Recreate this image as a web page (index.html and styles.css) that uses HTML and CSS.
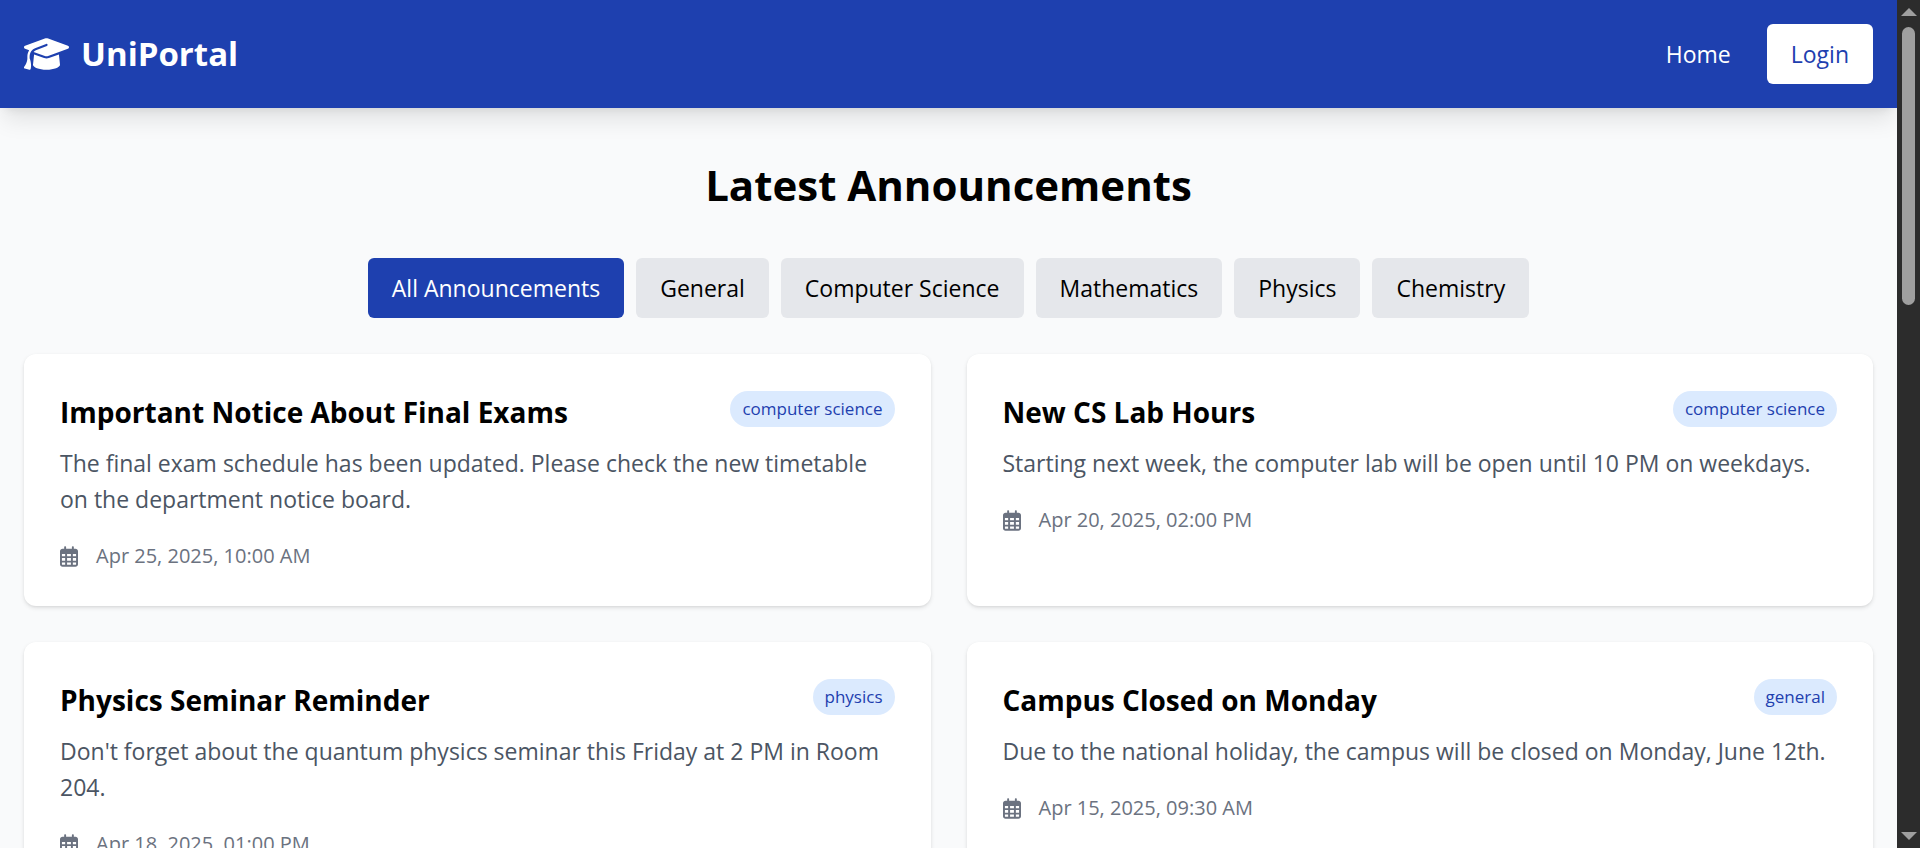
FILE: index.html
```html
<!DOCTYPE html>
<html lang="en">
<head>
  <meta charset="UTF-8" />
  <meta name="viewport" content="width=device-width, initial-scale=1.0" />
  <title>UniPortal</title>
  <link rel="stylesheet" href="styles.css">
</head>
<body>
  <!-- Shared icons -->
  <svg class="sprite" aria-hidden="true">
    <symbol id="icon-calendar" viewBox="0 0 448 512">
      <path d="M152 24c0-13.3-10.7-24-24-24s-24 10.7-24 24V64H64C28.7 64 0 92.7 0 128v16 48V448c0 35.3 28.7 64 64 64H384c35.3 0 64-28.7 64-64V192 144 128c0-35.3-28.7-64-64-64H344V24c0-13.3-10.7-24-24-24s-24 10.7-24 24V64H152V24zM48 192h80v56H48V192zm0 104h80v64H48V296zm128 0h96v64H176V296zm144 0h80v64H320V296zm80-48H320V192h80v56zm0 160v40c0 8.8-7.2 16-16 16H320V408h80zm-128 0v56H176V408h96zm-144 0v56H64c-8.8 0-16-7.2-16-16V408h80zM272 248H176V192h96v56z"/>
    </symbol>
  </svg>

  <div class="page">
    <header class="navbar">
      <a href="#" class="brand">
        <svg class="brand-icon" viewBox="0 0 640 512" aria-hidden="true">
          <path d="M320 32c-8.1 0-16.1 1.4-23.7 4.1L15.8 137.4C6.3 140.9 0 149.9 0 160s6.3 19.1 15.8 22.6l57.9 20.9C57.3 229.3 48 259.8 48 291.9v28.1c0 28.4-10.8 57.7-22.3 80.8c-6.5 13-13.9 25.8-22.5 37.6C0 442.7-.9 448.3 .9 453.4s6 8.9 11.2 10.2l64 16c4.2 1.1 8.7 .3 12.4-2s6.3-6.1 7.1-10.4c8.6-42.8 4.3-81.2-2.1-108.7C90.3 344.3 86 329.8 80 316.5V291.9c0-30.2 10.2-58.7 27.9-81.5c12.9-15.5 29.6-28 49.2-35.7l157-61.7c8.2-3.2 17.5 .8 20.7 9s-.8 17.5-9 20.7l-157 61.7c-12.4 4.9-23.3 12.4-32.2 21.6l159.6 57.6c7.6 2.7 15.6 4.1 23.7 4.1s16.1-1.4 23.7-4.1L624.2 182.6c9.5-3.4 15.8-12.5 15.8-22.6s-6.3-19.1-15.8-22.6L343.7 36.1C336.1 33.4 328.1 32 320 32zM128 408c0 35.3 86 72 192 72s192-36.7 192-72L496.7 262.6 354.5 314c-11.1 4-22.8 6-34.5 6s-23.5-2-34.5-6L143.3 262.6 128 408z"/>
        </svg>
        <span>UniPortal</span>
      </a>
      <nav class="nav-links">
        <a href="#">Home</a>
        <a href="#" class="login">Login</a>
      </nav>
    </header>

    <main class="content">
      <h1>Latest Announcements</h1>

      <div class="filters">
        <button class="filter active">All Announcements</button>
        <button class="filter">General</button>
        <button class="filter">Computer Science</button>
        <button class="filter">Mathematics</button>
        <button class="filter">Physics</button>
        <button class="filter">Chemistry</button>
      </div>

      <div class="cards">
        <article class="card">
          <div class="card-top">
            <h2>Important Notice About Final Exams</h2>
            <span class="tag">computer science</span>
          </div>
          <p class="text">The final exam schedule has been updated. Please check the new timetable on the department notice board.</p>
          <div class="date"><svg><use href="#icon-calendar"/></svg>Apr 25, 2025, 10:00 AM</div>
        </article>

        <article class="card">
          <div class="card-top">
            <h2>New CS Lab Hours</h2>
            <span class="tag">computer science</span>
          </div>
          <p class="text">Starting next week, the computer lab will be open until 10 PM on weekdays.</p>
          <div class="date"><svg><use href="#icon-calendar"/></svg>Apr 20, 2025, 02:00 PM</div>
        </article>

        <article class="card">
          <div class="card-top">
            <h2>Physics Seminar Reminder</h2>
            <span class="tag">physics</span>
          </div>
          <p class="text">Don't forget about the quantum physics seminar this Friday at 2 PM in Room 204.</p>
          <div class="date"><svg><use href="#icon-calendar"/></svg>Apr 18, 2025, 01:00 PM</div>
        </article>

        <article class="card">
          <div class="card-top">
            <h2>Campus Closed on Monday</h2>
            <span class="tag">general</span>
          </div>
          <p class="text">Due to the national holiday, the campus will be closed on Monday, June 12th.</p>
          <div class="date"><svg><use href="#icon-calendar"/></svg>Apr 15, 2025, 09:30 AM</div>
        </article>
      </div>
    </main>
  </div>

  <div class="scrollbar" aria-hidden="true">
    <span class="arrow up"></span>
    <div class="track"><div class="thumb"></div></div>
    <span class="arrow down"></span>
  </div>
</body>
</html>
```
FILE: styles.css
```css
* {
  box-sizing: border-box;
  margin: 0;
  padding: 0;
}
body {
  display: flex;
  height: 100vh;
  overflow: hidden;
  font-family: 'Segoe UI', 'Open Sans', 'Noto Sans', sans-serif;
  font-size: 23px;
  line-height: 36px;
  background: #f9fafb;
  color: #000;
}
a {
  color: inherit;
  text-decoration: none;
}
.sprite {
  display: none;
}
.page {
  flex: 1;
  min-width: 0;
  overflow: hidden;
}

/* Navbar */
.navbar {
  display: flex;
  justify-content: space-between;
  align-items: center;
  padding: 24px;
  background: #1e40af;
  color: #fff;
  box-shadow: 0 15px 22px -4px rgba(0, 0, 0, 0.1), 0 6px 9px -6px rgba(0, 0, 0, 0.1);
}
.brand {
  display: flex;
  align-items: center;
  gap: 12px;
  font-size: 33px;
  font-weight: bold;
}
.brand-icon {
  width: 45px;
  height: 36px;
  fill: currentColor;
}
.nav-links {
  display: flex;
  align-items: center;
  gap: 36px;
}
.login {
  padding: 12px 24px;
  background: #fff;
  color: #1e40af;
  border-radius: 6px;
}

/* Main */
.content {
  padding: 50px 24px;
}
h1 {
  font-size: 42px;
  line-height: 54px;
  text-align: center;
  margin-bottom: 46px;
}
.filters {
  display: flex;
  flex-wrap: wrap;
  justify-content: center;
  gap: 12px;
  margin-bottom: 36px;
}
.filter {
  padding: 12px 24px;
  border: none;
  border-radius: 6px;
  background: #e5e7eb;
  color: #000;
  font: inherit;
  cursor: pointer;
}
.filter.active {
  background: #1e40af;
  color: #fff;
}

/* Cards */
.cards {
  display: grid;
  grid-template-columns: 1fr 1fr;
  gap: 36px;
}
.card {
  padding: 37px 36px 35px;
  background: #fff;
  border-radius: 12px;
  box-shadow: 0 2px 4px rgba(0, 0, 0, 0.1), 0 1px 3px -1px rgba(0, 0, 0, 0.1);
}
.card-top {
  display: flex;
  justify-content: space-between;
  align-items: flex-start;
  margin-bottom: 12px;
}
h2 {
  font-size: 28px;
  line-height: 42px;
}
.tag {
  padding: 6px 12px;
  border-radius: 18px;
  background: #dbeafe;
  color: #1e40af;
  font-size: 17px;
  line-height: 24px;
}
.text {
  color: #4b5563;
  margin-bottom: 24px;
}
.date {
  display: flex;
  align-items: center;
  gap: 18px;
  color: #6b7280;
  font-size: 20px;
  line-height: 30px;
}
.date svg {
  width: 18px;
  height: 21px;
  fill: currentColor;
}

/* Scrollbar */
.scrollbar {
  display: flex;
  flex-direction: column;
  align-items: center;
  width: 23px;
  padding: 8px 0;
  background: #2c2c2c;
}
.arrow {
  border: 8px solid transparent;
}
.up {
  border-top: none;
  border-bottom-color: #9f9f9f;
}
.down {
  border-bottom: none;
  border-top-color: #9f9f9f;
}
.track {
  flex: 1;
  padding: 11px 0;
}
.thumb {
  width: 13px;
  height: 35%;
  border-radius: 7px;
  background: #9f9f9f;
}
```
